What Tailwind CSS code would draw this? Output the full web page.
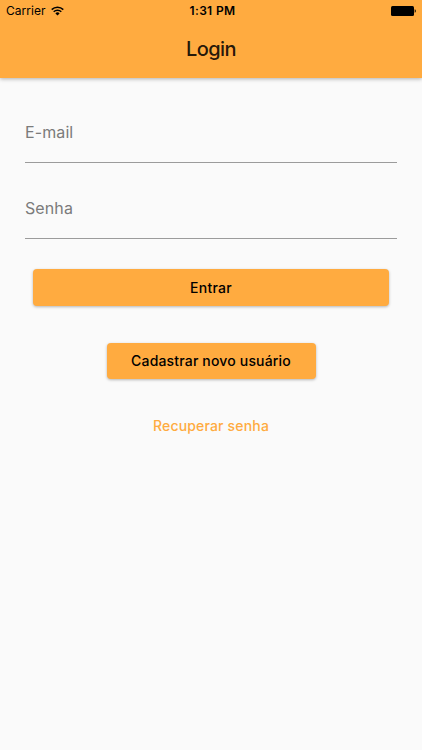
<!DOCTYPE html>
<html lang="pt-BR">
<head>
  <meta charset="UTF-8">
  <meta name="viewport" content="width=device-width, initial-scale=1.0">
  <title>Login</title>
  <script src="https://cdn.jsdelivr.net/npm/@tailwindcss/browser@4"></script>
</head>
<body class="bg-[#fafafa] min-h-screen font-['Inter',sans-serif] text-black">
  <header class="h-[78px] bg-[#ffab40] shadow-[0_1px_4px_rgba(0,0,0,0.3)]">
    <!-- Barra de status -->
    <div class="grid grid-cols-3 items-center h-[22px] pl-[6px] pr-[6px] text-[12px]">
      <div class="flex items-center gap-[5px]">
        <span class="tracking-[0.05px]">Carrier</span>
        <svg class="w-[13px] h-[10px]" viewBox="0 0 13 10" fill="none" stroke="#000" stroke-width="1.5">
          <path d="M.7 3.6a8.2 8.2 0 0 1 11.6 0"/>
          <path d="M2.7 5.7a5.4 5.4 0 0 1 7.6 0"/>
          <path d="M6.5 9.5 4.4 7.4a3 3 0 0 1 4.2 0z" fill="#000" stroke="none"/>
        </svg>
      </div>
      <span class="pl-[3px] text-center font-semibold tracking-[0.35px]">1:31 PM</span>
      <svg class="w-[25px] h-[10px] justify-self-end" viewBox="0 0 25 10">
        <rect x="0" y="0" width="23" height="10" rx="1.5"/>
        <path d="M23.7 3.3c1.5.4 1.5 3 0 3.4z"/>
      </svg>
    </div>
    <h1 class="text-center text-[20px] leading-[55px] font-medium tracking-[-0.55px] text-black/87">Login</h1>
  </header>

  <form class="flex flex-col items-center px-[25px] pt-[27px]">
    <input type="email" placeholder="E-mail" class="w-full h-[58px] pb-[3px] border-b border-[#9b9b9b] text-[16px] tracking-[0.1px] outline-none placeholder:text-[#7b7b7b]">
    <input type="password" placeholder="Senha" class="w-full h-[58px] mt-[18px] pb-[3px] border-b border-[#9b9b9b] text-[16px] tracking-[0.1px] outline-none placeholder:text-[#7b7b7b]">

    <button type="button" class="w-[356px] h-[37px] mt-[30px] pb-px rounded-[4px] bg-[#ffab40] text-[14px] font-medium tracking-[0.3px] shadow-[0_1px_3px_rgba(0,0,0,0.28)]">Entrar</button>
    <button type="button" class="w-[209px] h-[36px] mt-[37px] pb-[2px] rounded-[4px] bg-[#ffab40] text-[14px] font-medium tracking-[0.17px] shadow-[0_1px_3px_rgba(0,0,0,0.28)]">Cadastrar novo usuário</button>
    <a href="#" class="mt-[37px] text-[14px] leading-5 font-medium tracking-[0.17px] text-[#ffab40]">Recuperar senha</a>
  </form>
</body>
</html>
